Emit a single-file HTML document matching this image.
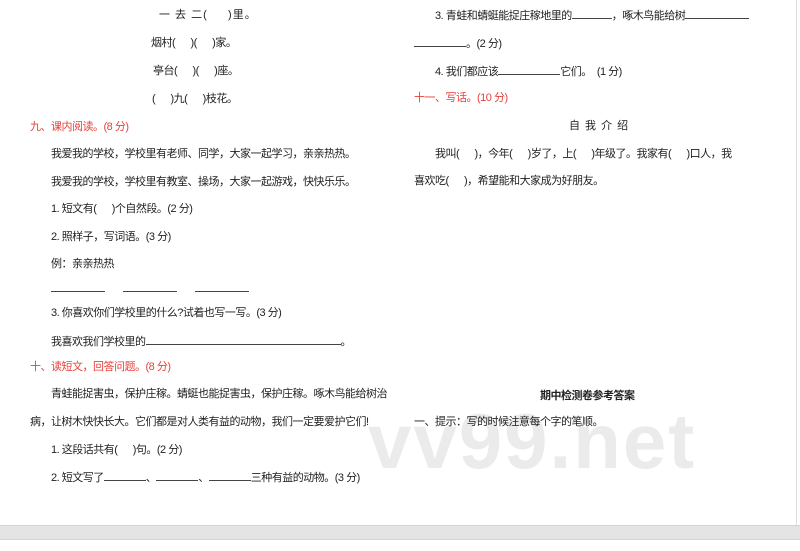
<!DOCTYPE html>
<html><head><meta charset="utf-8">
<style>
html,body{margin:0;padding:0;}
body{width:800px;height:551px;background:#fff;position:relative;overflow:hidden;font-family:"Liberation Sans","Noto Sans CJK SC",sans-serif;font-size:11px;color:#222;}
.l{position:absolute;white-space:nowrap;line-height:14px;letter-spacing:-0.5px;}
.r{color:#e8403a;}
.u{display:inline-block;border-bottom:1px solid #444;height:10px;vertical-align:baseline;}
.wm{position:absolute;left:368px;top:396px;font-family:"Liberation Sans",sans-serif;font-weight:bold;font-size:78px;color:#ebebeb;letter-spacing:2px;line-height:90px;}
.band{position:absolute;left:0;top:525px;width:800px;height:13px;background:#e4e4e4;border-top:1px solid #d4d4d4;border-bottom:1px solid #d4d4d4;}
.rb{position:absolute;left:796px;top:0;width:1px;height:525px;background:#ddd;}
</style></head><body>
<div class="wm">vv99.net</div>
<div class="l" style="left:159px;top:8px;letter-spacing:1px">一 去 二(&nbsp;&nbsp;&nbsp;&nbsp;&nbsp;)里。</div>
<div class="l" style="left:151px;top:36px">烟村(&nbsp;&nbsp;&nbsp;&nbsp;&nbsp;&nbsp;)(&nbsp;&nbsp;&nbsp;&nbsp;&nbsp;&nbsp;)家。</div>
<div class="l" style="left:153px;top:64px">亭台(&nbsp;&nbsp;&nbsp;&nbsp;&nbsp;&nbsp;)(&nbsp;&nbsp;&nbsp;&nbsp;&nbsp;&nbsp;)座。</div>
<div class="l" style="left:152px;top:92px">(&nbsp;&nbsp;&nbsp;&nbsp;&nbsp;&nbsp;)九(&nbsp;&nbsp;&nbsp;&nbsp;&nbsp;&nbsp;)枝花。</div>
<div class="l r" style="left:30px;top:120px">九、课内阅读。(8 分)</div>
<div class="l" style="left:51px;top:147px">我爱我的学校，学校里有老师、同学，大家一起学习，亲亲热热。</div>
<div class="l" style="left:51px;top:175px">我爱我的学校，学校里有教室、操场，大家一起游戏，快快乐乐。</div>
<div class="l" style="left:51px;top:202px">1. 短文有(&nbsp;&nbsp;&nbsp;&nbsp;&nbsp;&nbsp;)个自然段。(2 分)</div>
<div class="l" style="left:51px;top:230px">2. 照样子，写词语。(3 分)</div>
<div class="l" style="left:51px;top:257px">例：亲亲热热</div>
<div class="l" style="left:51px;top:281px"><span class="u" style="width:54px"></span>&nbsp;&nbsp;&nbsp;&nbsp;&nbsp;&nbsp;&nbsp;<span class="u" style="width:54px"></span>&nbsp;&nbsp;&nbsp;&nbsp;&nbsp;&nbsp;&nbsp;<span class="u" style="width:54px"></span></div>
<div class="l" style="left:51px;top:306px">3. 你喜欢你们学校里的什么?试着也写一写。(3 分)</div>
<div class="l" style="left:51px;top:334px">我喜欢我们学校里的<span class="u" style="width:195px"></span>。</div>
<div class="l r" style="left:30px;top:360px">十、读短文，回答问题。(8 分)</div>
<div class="l" style="left:51px;top:387px">青蛙能捉害虫，保护庄稼。蜻蜓也能捉害虫，保护庄稼。啄木鸟能给树治</div>
<div class="l" style="left:30px;top:415px">病，让树木快快长大。它们都是对人类有益的动物，我们一定要爱护它们!</div>
<div class="l" style="left:51px;top:443px">1. 这段话共有(&nbsp;&nbsp;&nbsp;&nbsp;&nbsp;&nbsp;)句。(2 分)</div>
<div class="l" style="left:51px;top:470px">2. 短文写了<span class="u" style="width:42px"></span>、<span class="u" style="width:42px"></span>、<span class="u" style="width:42px"></span>三种有益的动物。(3 分)</div>

<div class="l" style="left:435px;top:8px">3. 青蛙和蜻蜓能捉庄稼地里的<span class="u" style="width:40px"></span>，啄木鸟能给树<span class="u" style="width:64px"></span></div>
<div class="l" style="left:414px;top:36px"><span class="u" style="width:52px"></span>。(2 分)</div>
<div class="l" style="left:435px;top:64px">4. 我们都应该<span class="u" style="width:62px"></span>它们。&nbsp;&nbsp;(1 分)</div>
<div class="l r" style="left:414px;top:91px">十一、写话。(10 分)</div>
<div class="l" style="left:569px;top:119px;letter-spacing:1px">自 我 介 绍</div>
<div class="l" style="left:435px;top:147px">我叫(&nbsp;&nbsp;&nbsp;&nbsp;&nbsp;&nbsp;)，今年(&nbsp;&nbsp;&nbsp;&nbsp;&nbsp;&nbsp;)岁了，上(&nbsp;&nbsp;&nbsp;&nbsp;&nbsp;&nbsp;)年级了。我家有(&nbsp;&nbsp;&nbsp;&nbsp;&nbsp;&nbsp;)口人，我</div>
<div class="l" style="left:414px;top:174px">喜欢吃(&nbsp;&nbsp;&nbsp;&nbsp;&nbsp;&nbsp;)，希望能和大家成为好朋友。</div>
<div class="l" style="left:540px;top:389px;font-weight:bold;color:#222">期中检测卷参考答案</div>
<div class="l" style="left:414px;top:415px">一、提示：写的时候注意每个字的笔顺。</div>
<div class="rb"></div>
<div class="band"></div>
</body></html>
